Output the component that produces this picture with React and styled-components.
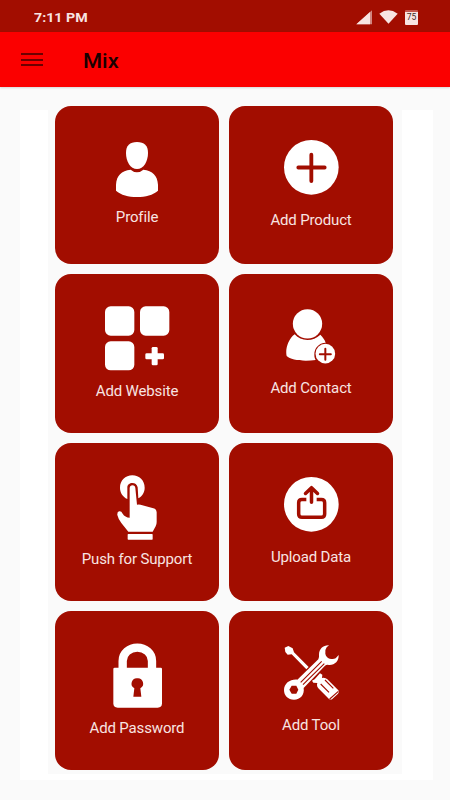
import styled, { createGlobalStyle } from "styled-components";

const DARK = "#a20d00";

const ProfileIcon = () => (
  <svg width="42" height="55" viewBox="198 126 126 165" fill="#fff">
    <path d="M261 126C283 126 294 137 294 158C294 184 281 207 261 207C241 207 228 184 228 158C228 137 239 126 261 126Z" />
    <path d="M242 209Q251 217 261 217Q271 217 280 209C308 212 322 226 324 254V272C309 285 287 291 261 291C235 291 213 285 198 272V254C200 226 214 212 242 209Z" />
  </svg>
);

const PlusIcon = () => (
  <svg width="55" height="55" viewBox="0 0 165 165">
    <circle cx="82" cy="82" r="82" fill="#fff" />
    <path
      d="M82 44V123M43 82.5H122"
      fill="none"
      stroke={DARK}
      strokeWidth="11.5"
      strokeLinecap="round"
    />
  </svg>
);

const WebsiteIcon = () => (
  <svg width="65" height="65" viewBox="0 0 195 195" fill="#fff">
    <rect x="0" y="1" width="88" height="88" rx="17" />
    <rect x="105" y="1" width="88" height="88" rx="17" />
    <rect x="0" y="106" width="88" height="87" rx="17" />
    <rect x="121" y="142" width="56" height="18" rx="4" />
    <rect x="140" y="123" width="18" height="55" rx="4" />
  </svg>
);

const ContactIcon = () => (
  <svg width="50" height="55" viewBox="183 115 150 165" fill="#fff">
    <path d="M209 191C219 202 232 208 247 208C262 208 275 202 286 192C294 200 299 207 302 216C281 217 268 232 268 252C268 258 269 263 272 268C237 273 197 269 185 256C180 236 190 205 209 191Z" />
    <circle cx="247.5" cy="159.5" r="44" />
    <circle cx="301" cy="249" r="29.5" />
    <path
      d="M301 234V267M284.5 250.5H317.5"
      fill="none"
      stroke={DARK}
      strokeWidth="6"
      strokeLinecap="round"
    />
  </svg>
);

const PushIcon = () => (
  <svg width="40" height="65" viewBox="202 109 120 195" fill="#fff">
    <path d="M233 181C219 174 211 162 211 147C211 126 227 110 248 110C269 110 285 126 285 147C285 161 278 172 266 179L264 146C262 137 256 133 248 133C240 133 233 138 233 146Z" />
    <path
      d="M240 148Q241 140 248.500 140Q256 140 257 148L262 198Q270 196 278 200L311 209Q320 211 321 221V250Q321 257 318 263L309 279H236L215 253Q206 242 203 229Q202 219 209 218Q215 217 219 225Q226 236 240 237Z"
      stroke={DARK}
      strokeWidth="5"
      paintOrder="stroke"
    />
    <rect x="234" y="286" width="75" height="17" rx="2" />
  </svg>
);

const UploadIcon = () => (
  <svg width="55" height="55" viewBox="0 0 165 165">
    <circle cx="82" cy="82" r="82" fill="#fff" />
    <g
      fill="none"
      stroke={DARK}
      strokeWidth="10.5"
      strokeLinecap="round"
      strokeLinejoin="round"
    >
      <path d="M82.5 76V33M64.5 49.5L82.5 32L100.5 49.5" />
      <path
        d="M67 67.5H54Q44 67.5 44 77V111Q44 121 54 121H112Q122 121 122 111V77Q122 67.5 112 67.5H98"
        strokeLinecap="butt"
      />
    </g>
  </svg>
);

const LockIcon = () => (
  <svg width="49" height="65" viewBox="188 109 147 195">
    <path
      d="M217 190V163C217 140 237 123 261 123C285 123 305 140 305 163V190"
      fill="none"
      stroke="#fff"
      strokeWidth="25"
    />
    <path
      d="M193 183H331Q335 183 335 187V290Q335 303 322 303H202Q189 303 189 290V187Q189 183 193 183Z"
      fill="#fff"
    />
    <path
      d="M261 215A16 16 0 0 1 270 245L273 270H249L252 245A16 16 0 0 1 261 215Z"
      fill={DARK}
    />
  </svg>
);

const ToolIcon = () => (
  <svg width="55" height="55" viewBox="176 117 165 165" fill="#fff">
    {/* screwdriver */}
    <path d="M178 125L189 120L202 127L206 139L250 183L243 190L199 145L187 146L180 138Z" />
    <path d="M284 202L291 206L290 216Q300 214 306 220L339 253Q342 258 338 263L320 280Q316 282 311 279L279 247Q273 240 276 231L264 230L260 224L268 220Z" />
    <path
      d="M286 234L311 259M299 222L324 247M313 279L339 256"
      stroke={DARK}
      strokeWidth="3.5"
      fill="none"
    />
    {/* wrench */}
    <path d="M311 118C294 117 281 129 281 145Q282 154 279 160L216 221C195 219 176 232 176 252C176 269 188 281 206 281C225 281 238 267 235 246L299 179Q304 175 311 177C328 178 341 165 340 147L331 157Q324 161 313 158Q302 154 300 143Q298 132 304 124Z" />
    <path
      d="M226 229L289 166M233 236L297 173"
      stroke={DARK}
      strokeWidth="3.5"
      fill="none"
    />
    <path d="M199 239H213L219 251L213 263H199L192 251Z" fill={DARK} />
  </svg>
);

const tiles = [
  { label: "Profile", Icon: ProfileIcon, top: 36.5, gap: 10.5 },
  { label: "Add Product", Icon: PlusIcon, top: 34.5, gap: 15.5 },
  { label: "Add Website", Icon: WebsiteIcon, top: 32, gap: 11 },
  { label: "Add Contact", Icon: ContactIcon, top: 34.5, gap: 15 },
  { label: "Push for Support", Icon: PushIcon, top: 32, gap: 10.5 },
  { label: "Upload Data", Icon: UploadIcon, top: 34.5, gap: 15.5 },
  { label: "Add Password", Icon: LockIcon, top: 31.5, gap: 11 },
  { label: "Add Tool", Icon: ToolIcon, top: 34, gap: 15.5 },
];

const App = () => {
  return (
    <Screen>
      <GlobalStyle />
      <StatusBar>
        <Clock>7:11 PM</Clock>
        <StatusIcons>
          <svg width="17" height="15" viewBox="0 0 51 45">
            <path d="M1 43L48 1V43Z" fill="#fff" opacity=".5" />
            <path d="M1 43L42 6V43Z" fill="#f8e4e2" />
          </svg>
          <svg width="19" height="15" viewBox="0 0 57 45">
            <path d="M1 11Q28 -9 56 11L28.5 41Z" fill="#f8e4e2" />
          </svg>
          <Battery>75</Battery>
        </StatusIcons>
      </StatusBar>
      <AppBar>
        <MenuButton aria-label="Menu">
          <span />
          <span />
          <span />
        </MenuButton>
        <Title>Mix</Title>
      </AppBar>
      <Content>
        <Panel>
          <TileGrid>
            {tiles.map(({ label, Icon, top, gap }) => (
              <Tile key={label} $top={top} $gap={gap}>
                <Icon />
                <p>{label}</p>
              </Tile>
            ))}
          </TileGrid>
        </Panel>
      </Content>
    </Screen>
  );
};

const GlobalStyle = createGlobalStyle`
  * {
    box-sizing: border-box;
  }
  body {
    margin: 0;
    background: #fafafa;
    font-family: Roboto, "Liberation Sans", sans-serif;
  }
`;

const Screen = styled.div`
  width: 450px;
  height: 800px;
  overflow: hidden;
  background: #fafafa;
`;

const StatusBar = styled.header`
  display: flex;
  align-items: center;
  justify-content: space-between;
  height: 32px;
  padding: 2px 32px 0 34px;
  background: ${DARK};
`;

const Clock = styled.span`
  padding-top: 1px;
  font-size: 12.7px;
  font-weight: 700;
  line-height: 16px;
  color: #f8e4e2;
  transform: scaleX(1.12);
  transform-origin: left;
`;

const StatusIcons = styled.div`
  display: flex;
  align-items: center;
  gap: 6px;

  svg {
    display: block;
  }
`;

const Battery = styled.span`
  display: block;
  width: 13px;
  height: 15px;
  margin-left: 1px;
  border-top: 2px solid #c4564d;
  border-radius: 1px;
  background: #f8e4e2;
  color: #3f2a29;
  font-size: 8.5px;
  line-height: 11px;
  text-align: center;
`;

const AppBar = styled.nav`
  display: flex;
  align-items: center;
  height: 55px;
  padding: 0 21px;
  background: #fb0000;
  box-shadow: 0 1px 2px rgba(0, 0, 0, 0.15);
`;

const MenuButton = styled.button`
  display: flex;
  flex-direction: column;
  gap: 3.5px;
  width: 22px;
  padding: 0;
  border: 0;
  background: none;

  span {
    height: 2px;
    background: #6d0000;
  }
`;

const Title = styled.h1`
  margin: 4px 0 0 40px;
  font-size: 19.5px;
  font-weight: 500;
  line-height: 24px;
  color: #190000;
  transform: scaleX(1.12);
  transform-origin: left;
`;

const Content = styled.main`
  padding: 23px 17px 0 20px;
`;

const Panel = styled.section`
  display: flow-root;
  height: 670px;
  padding: 0 31px 0 28px;
  background: #fff;
`;

const TileGrid = styled.div`
  display: grid;
  grid-template-columns: 164px 164px;
  grid-auto-rows: 158.5px;
  gap: 10px;
  height: 668px;
  margin-top: -4.5px;
  padding: 0 7px;
  background: #fafafa;
`;

const Tile = styled.div`
  display: flex;
  flex-direction: column;
  align-items: center;
  padding-top: ${(props) => props.$top}px;
  border-radius: 16px;
  background: ${DARK};

  svg {
    display: block;
    flex-shrink: 0;
  }

  p {
    margin: ${(props) => props.$gap}px 0 0;
    font-size: 15px;
    line-height: 18px;
    letter-spacing: -0.15px;
    color: #f8e4e2;
    white-space: nowrap;
  }
`;

export default App;
